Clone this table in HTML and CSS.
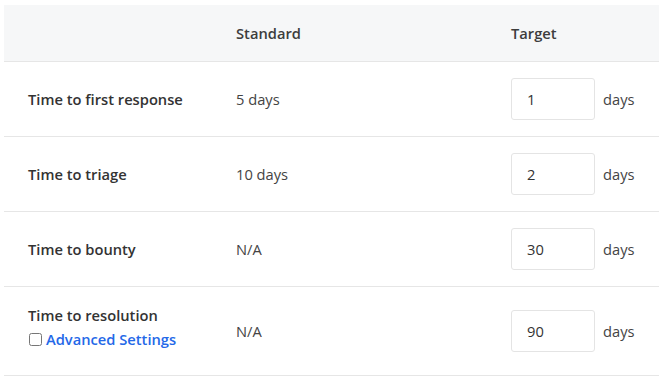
FILE: index.html
```html
<!DOCTYPE html>
<html>
<head>
<meta charset="utf-8">
<link rel="stylesheet" href="styles.css">
</head>
<body>
<table class="sla">
  <colgroup>
    <col class="c-label"><col class="c-std"><col class="c-target">
  </colgroup>
  <thead>
    <tr><th></th><th>Standard</th><th>Target</th></tr>
  </thead>
  <tbody>
    <tr>
      <td class="label">Time to first response</td>
      <td class="std">5 days</td>
      <td><div class="target"><input class="num" type="text" value="1"><span class="unit">days</span></div></td>
    </tr>
    <tr>
      <td class="label">Time to triage</td>
      <td class="std">10 days</td>
      <td><div class="target"><input class="num" type="text" value="2"><span class="unit">days</span></div></td>
    </tr>
    <tr>
      <td class="label">Time to bounty</td>
      <td class="std">N/A</td>
      <td><div class="target"><input class="num" type="text" value="30"><span class="unit">days</span></div></td>
    </tr>
    <tr class="last">
      <td class="label">
        <div class="stack">
          <div>Time to resolution</div>
          <label class="adv"><input type="checkbox" class="chk"><a href="#" class="link">Advanced Settings</a></label>
        </div>
      </td>
      <td class="std">N/A</td>
      <td><div class="target"><input class="num" type="text" value="90"><span class="unit">days</span></div></td>
    </tr>
  </tbody>
</table>
</body>
</html>
```
FILE: styles.css
```css
html, body { margin: 0; padding: 0; background: #fff; }
body {
  padding: 5px 3px 0 4px;
  font-family: "Open Sans", Lato, sans-serif;
  font-size: 14.7px;
  color: #333;
}
.sla {
  width: 655px;
  border-collapse: collapse;
}
.c-label { width: 208px; }
.c-std { width: 275px; }
.sla th {
  background: #f6f7f8;
  height: 56px;
  padding: 0 24px;
  text-align: left;
  font-weight: 600;
  color: #3d3d3d;
  border-bottom: 1px solid #e6e6e6;
}
.sla td {
  height: 74px;
  padding: 0 24px;
  border-bottom: 1px solid #e6e6e6;
  vertical-align: middle;
}
.sla tr.last td { height: 88px; }
.stack { line-height: 20px; margin-bottom: 8px; }
.label { font-weight: 600; color: #333; }
.std { color: #444; }
.target { display: flex; align-items: center; gap: 8px; }
.num {
  box-sizing: border-box;
  width: 84px;
  height: 42px;
  padding: 0 15px;
  border: 1px solid #e4e4e4;
  border-radius: 3px;
  font-family: inherit;
  font-size: 14.7px;
  color: #333;
  outline: none;
}
.unit { color: #444; }
.adv { display: flex; align-items: center; gap: 4px; margin-top: 4px; }
.chk { margin: 0 0 0 1px; width: 13px; height: 13px; }
.link { color: #2468e8; text-decoration: none; font-weight: 600; }
```
